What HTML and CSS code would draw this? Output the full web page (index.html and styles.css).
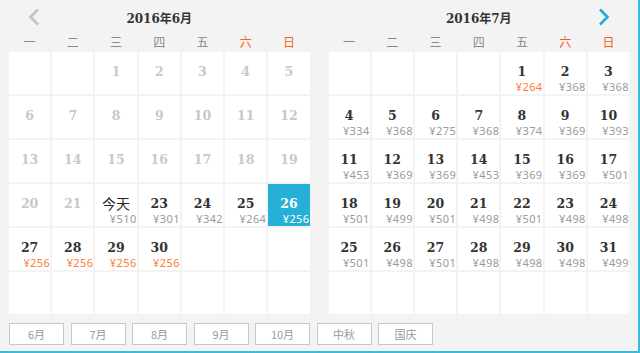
FILE: index.html
```html
<!DOCTYPE html>
<html lang="zh-CN">
<head>
<meta charset="utf-8">
<title>日历</title>
<link rel="stylesheet" href="styles.css">
</head>
<body>
<div class="picker">
  <div class="months">
    <div class="month">
      <div class="head">
        <svg class="nav prev" width="12" height="18" viewBox="0 0 12 18"><polyline points="10,1.5 2.5,9 10,16.5" fill="none" stroke="#c2c2c2" stroke-width="2.6"/></svg>
        <div class="title">2016年6月</div>
        <span class="nav"></span>
      </div>
      <div class="week"><span>一</span><span>二</span><span>三</span><span>四</span><span>五</span><span class="we">六</span><span class="we">日</span></div>
      <div class="days">
        <div class="d"></div><div class="d"></div>
        <div class="d past"><b>1</b></div><div class="d past"><b>2</b></div><div class="d past"><b>3</b></div><div class="d past"><b>4</b></div><div class="d past"><b>5</b></div>
        <div class="d past"><b>6</b></div><div class="d past"><b>7</b></div><div class="d past"><b>8</b></div><div class="d past"><b>9</b></div><div class="d past"><b>10</b></div><div class="d past"><b>11</b></div><div class="d past"><b>12</b></div>
        <div class="d past"><b>13</b></div><div class="d past"><b>14</b></div><div class="d past"><b>15</b></div><div class="d past"><b>16</b></div><div class="d past"><b>17</b></div><div class="d past"><b>18</b></div><div class="d past"><b>19</b></div>
        <div class="d past"><b>20</b></div><div class="d past"><b>21</b></div>
        <div class="d"><b class="today">今天</b><i class="under-today">¥510</i></div>
        <div class="d"><b>23</b><i>¥301</i></div>
        <div class="d"><b>24</b><i>¥342</i></div>
        <div class="d"><b>25</b><i>¥264</i></div>
        <div class="d sel"><b>26</b><i>¥256</i></div>
        <div class="d"><b>27</b><i class="low">¥256</i></div>
        <div class="d"><b>28</b><i class="low">¥256</i></div>
        <div class="d"><b>29</b><i class="low">¥256</i></div>
        <div class="d"><b>30</b><i class="low">¥256</i></div>
        <div class="d"></div><div class="d"></div><div class="d"></div>
        <div class="d"></div><div class="d"></div><div class="d"></div><div class="d"></div><div class="d"></div><div class="d"></div><div class="d"></div>
      </div>
    </div>
    <div class="month">
      <div class="head">
        <span class="nav"></span>
        <div class="title">2016年7月</div>
        <svg class="nav next" width="12" height="18" viewBox="0 0 12 18"><polyline points="2,1.5 9.5,9 2,16.5" fill="none" stroke="#26acd4" stroke-width="2.6"/></svg>
      </div>
      <div class="week"><span>一</span><span>二</span><span>三</span><span>四</span><span>五</span><span class="we">六</span><span class="we">日</span></div>
      <div class="days">
        <div class="d"></div><div class="d"></div><div class="d"></div><div class="d"></div>
        <div class="d"><b>1</b><i class="low">¥264</i></div>
        <div class="d"><b>2</b><i>¥368</i></div>
        <div class="d"><b>3</b><i>¥368</i></div>
        <div class="d"><b>4</b><i>¥334</i></div>
        <div class="d"><b>5</b><i>¥368</i></div>
        <div class="d"><b>6</b><i>¥275</i></div>
        <div class="d"><b>7</b><i>¥368</i></div>
        <div class="d"><b>8</b><i>¥374</i></div>
        <div class="d"><b>9</b><i>¥369</i></div>
        <div class="d"><b>10</b><i>¥393</i></div>
        <div class="d"><b>11</b><i>¥453</i></div>
        <div class="d"><b>12</b><i>¥369</i></div>
        <div class="d"><b>13</b><i>¥369</i></div>
        <div class="d"><b>14</b><i>¥453</i></div>
        <div class="d"><b>15</b><i>¥369</i></div>
        <div class="d"><b>16</b><i>¥369</i></div>
        <div class="d"><b>17</b><i>¥501</i></div>
        <div class="d"><b>18</b><i>¥501</i></div>
        <div class="d"><b>19</b><i>¥499</i></div>
        <div class="d"><b>20</b><i>¥501</i></div>
        <div class="d"><b>21</b><i>¥498</i></div>
        <div class="d"><b>22</b><i>¥501</i></div>
        <div class="d"><b>23</b><i>¥498</i></div>
        <div class="d"><b>24</b><i>¥498</i></div>
        <div class="d"><b>25</b><i>¥501</i></div>
        <div class="d"><b>26</b><i>¥498</i></div>
        <div class="d"><b>27</b><i>¥501</i></div>
        <div class="d"><b>28</b><i>¥498</i></div>
        <div class="d"><b>29</b><i>¥498</i></div>
        <div class="d"><b>30</b><i>¥498</i></div>
        <div class="d"><b>31</b><i>¥499</i></div>
        <div class="d"></div><div class="d"></div><div class="d"></div><div class="d"></div><div class="d"></div><div class="d"></div><div class="d"></div>
      </div>
    </div>
  </div>
  <div class="shortcuts">
    <span class="btn">6月</span><span class="btn">7月</span><span class="btn">8月</span><span class="btn">9月</span><span class="btn">10月</span><span class="btn">中秋</span><span class="btn">国庆</span>
  </div>
</div>
</body>
</html>
```
FILE: styles.css
```css
html, body {
  margin: 0;
  padding: 0;
  background: #f3f3f3;
}
.picker {
  box-sizing: border-box;
  width: 640px;
  height: 353px;
  background: #f3f3f3;
  border-right: 2px solid #3cbcdc;
  border-bottom: 2px solid #3cbcdc;
  font-family: "Noto Sans", "Noto Sans CJK SC", sans-serif;
}
.months {
  display: flex;
  gap: 19px;
  padding: 0 9px 0 9px;
}
.month {
  width: 301px;
}
.head {
  height: 33px;
  display: flex;
  align-items: center;
  justify-content: space-between;
  padding: 0 19px;
}
.nav {
  display: block;
  width: 12px;
  height: 18px;
  margin-top: 1px;
}
.title {
  font-family: "DejaVu Serif", "Noto Sans CJK SC", serif;
  font-weight: bold;
  font-size: 12px;
  color: #333;
  margin-top: 1px;
}
.week {
  display: grid;
  grid-template-columns: repeat(7, 1fr);
  column-gap: 2px;
  height: 17px;
  margin-bottom: 2px;
  font-family: "Noto Sans CJK SC", sans-serif;
  font-size: 12px;
  line-height: 17px;
  color: #8a8a8a;
  text-align: center;
}
.week .we {
  color: #ff5a1e;
}
.days {
  display: grid;
  grid-template-columns: repeat(7, 1fr);
  grid-auto-rows: 42px;
  gap: 2px;
}
.d {
  background: #fff;
  display: flex;
  flex-direction: column;
  padding-top: 12px;
  box-sizing: border-box;
}
.d b {
  display: block;
  text-align: center;
  font-family: "DejaVu Serif", serif;
  font-weight: bold;
  font-size: 12.5px;
  line-height: 16px;
  color: #333;
}
.d b.today {
  font-family: "Noto Sans CJK SC", sans-serif;
  font-weight: normal;
  font-size: 14px;
  line-height: 14px;
  margin-top: 0;
  color: #222;
}
.d.past b {
  color: #c8c8c8;
}
.d i {
  display: block;
  font-style: normal;
  text-align: right;
  font-size: 11px;
  line-height: 12px;
  letter-spacing: 0.4px;
  color: #9a9a9a;
  margin-top: 1px;
  padding-right: 0;
  white-space: nowrap;
}
.d i.under-today {
  margin-top: 3px;
}
.d i.low {
  color: #ff7a33;
}
.d.sel {
  background: #27b0d6;
}
.d.sel b, .d.sel i {
  color: #fff;
}
.shortcuts {
  display: flex;
  gap: 6.5px;
  padding: 9px 9px 0 9px;
}
.btn {
  box-sizing: border-box;
  width: 55px;
  height: 22px;
  background: #fff;
  border: 1px solid #c8c8c8;
  font-family: "Noto Sans CJK SC", sans-serif;
  font-size: 11px;
  line-height: 20px;
  text-align: center;
  color: #999;
}
```
